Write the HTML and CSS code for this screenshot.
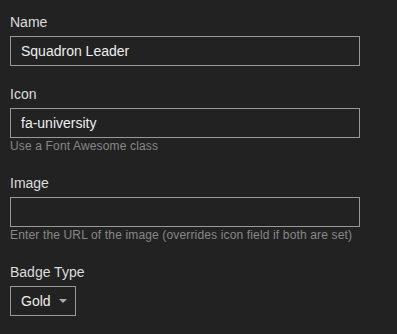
FILE: index.html
```
<!DOCTYPE html>
<html>
    <head>
        <title>Badge</title>
        <link rel="stylesheet" href="styles.css">
    </head>
    <body>
        <div class="badge_form">
            <div class="field">
                <label>Name</label>
                <div class="text_input">Squadron Leader</div>
            </div>

            <div class="field">
                <label>Icon</label>
                <div class="text_input">fa-university</div>
                <div class="help">Use a Font Awesome class</div>
            </div>

            <div class="field">
                <label>Image</label>
                <div class="text_input"></div>
                <div class="help">Enter the URL of the image (overrides icon field if both are set)</div>
            </div>

            <div class="field">
                <label>Badge Type</label>
                <div class="select_box">
                    Gold
                    <span class="caret"></span>
                </div>
            </div>
        </div>
    </body>
</html>
```

FILE: styles.css
```
body
{
    margin:0;
    background-color:#222222;
    color:#dddddd;
    font-family:"Liberation Sans", Arial, sans-serif;
    font-size:14px;
}

.badge_form
{
    width:350px;
    padding:12px 10px;
}

.field
{
    margin-bottom:18px;
}

.field label
{
    display:block;
    line-height:20px;
    margin-bottom:4px;
}

.text_input
{
    box-sizing:border-box;
    height:30px;
    line-height:28px;
    border:1px solid #999999;
    padding:0 10px;
    color:#eeeeee;
}

.help
{
    font-size:12px;
    line-height:17px;
    letter-spacing:0.15px;
    color:#888888;
}

.select_box
{
    box-sizing:border-box;
    display:inline-flex;
    align-items:center;
    gap:8px;
    height:30px;
    width:66px;
    border:1px solid #999999;
    padding:0 10px;
    color:#eeeeee;
}

.caret
{
    width:0px;
    height:0px;
    border-left:4px solid transparent;
    border-right:4px solid transparent;
    border-top:4px solid #aaaaaa;
}
```
